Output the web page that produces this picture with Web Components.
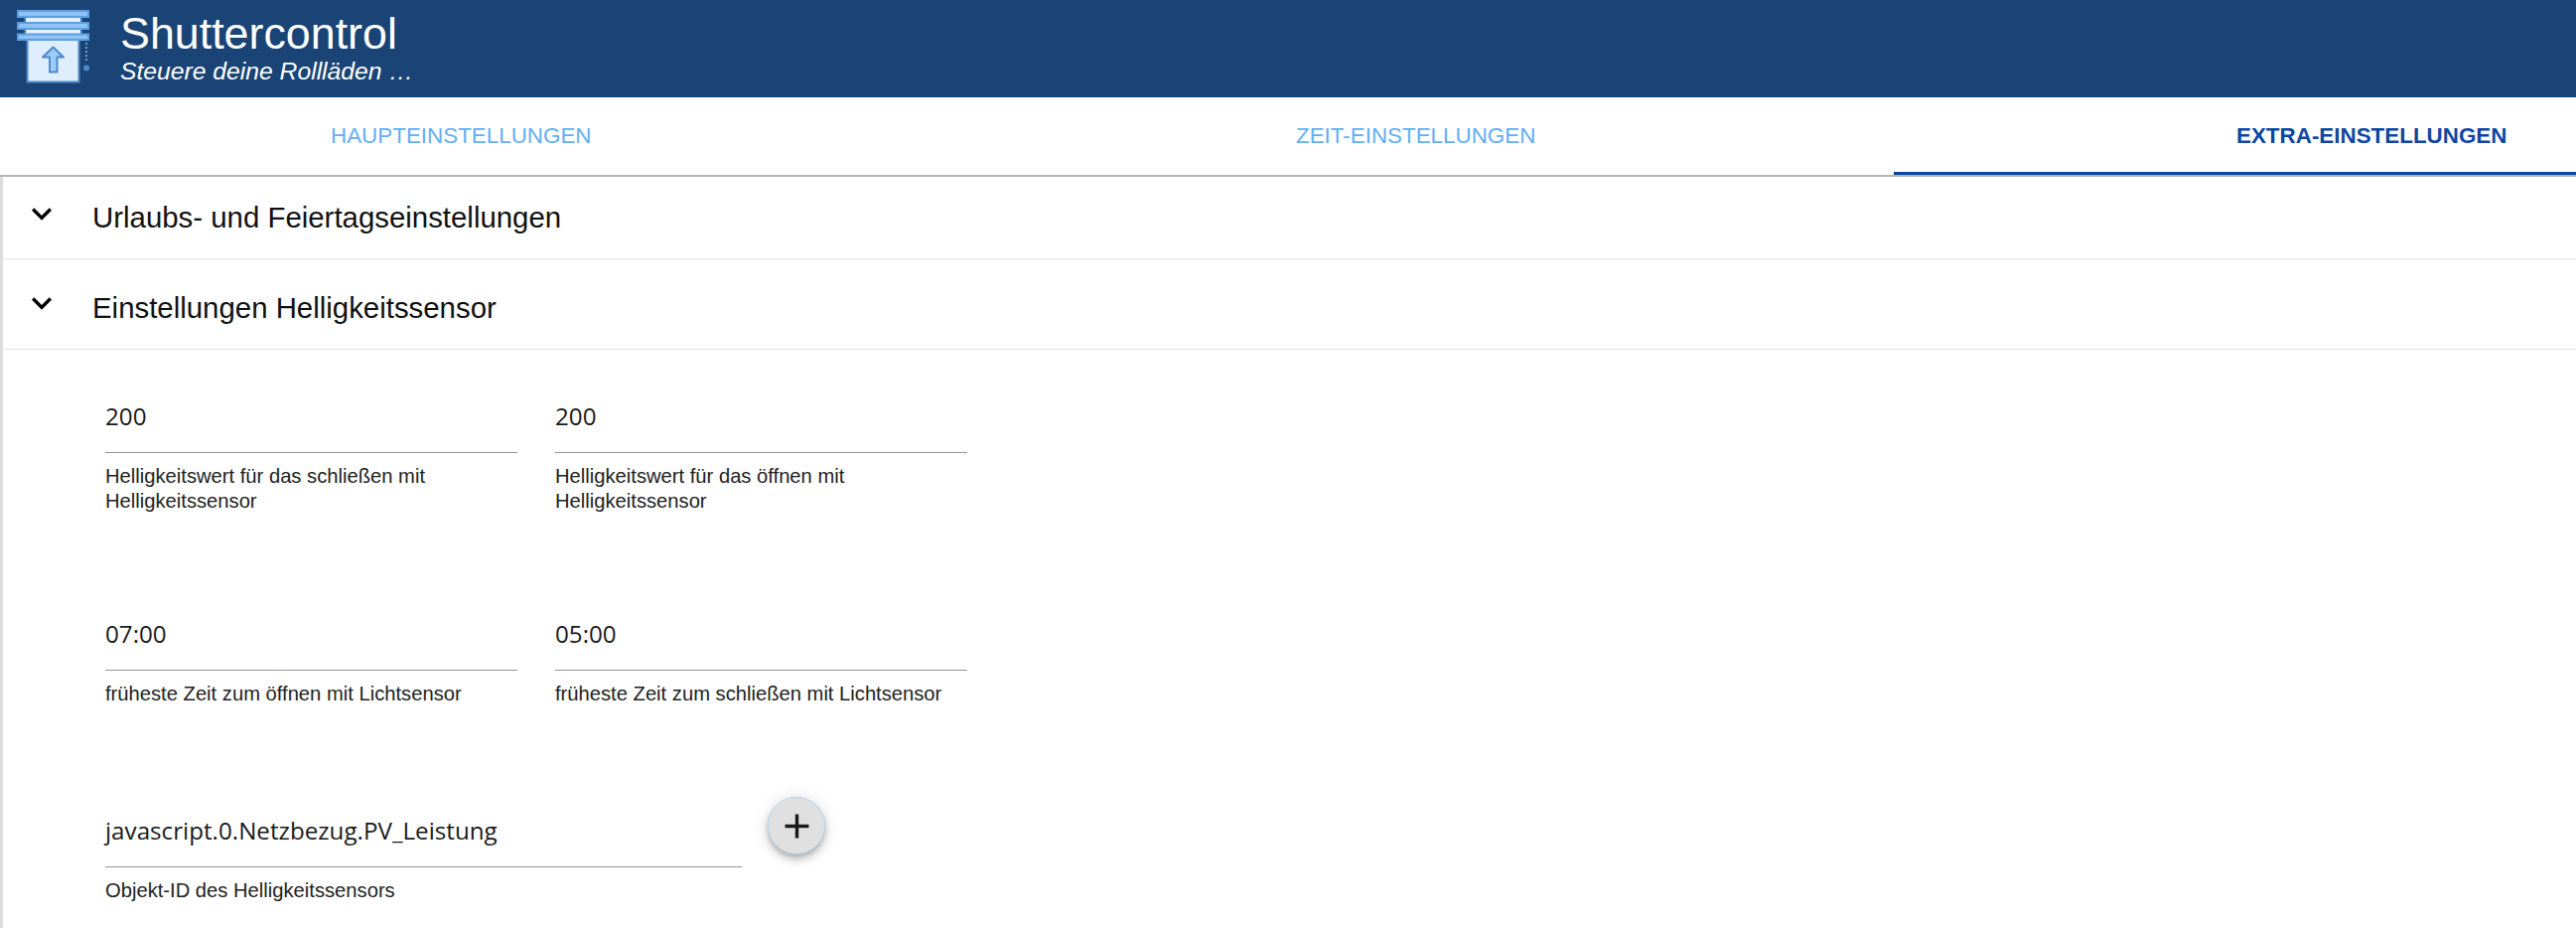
<!DOCTYPE html>
<html lang="de">
<head>
<meta charset="utf-8">
<title>Shuttercontrol</title>
<style>
    html, body{
        margin: 0;
        height: 100%;
        overflow: hidden;
        background: #fff;
        font-family: "Liberation Sans", Arial, sans-serif;
    }
</style>
</head>
<body>
<app-header titel="Shuttercontrol" untertitel="Steuere deine Rollläden …"></app-header>
<tab-bar>
    <tab-item style="width:945px;padding-left:333px">HAUPTEINSTELLUNGEN</tab-item>
    <tab-item style="width:962px;padding-left:360px">ZEIT-EINSTELLUNGEN</tab-item>
    <tab-item active style="flex:1;padding-left:345px">EXTRA-EINSTELLUNGEN</tab-item>
</tab-bar>
<settings-panel>
    <accordion-row height="83" pad="24" icon="16.5">Urlaubs- und Feiertagseinstellungen</accordion-row>
    <accordion-row height="91" pad="32" icon="24">Einstellungen Helligkeitssensor</accordion-row>
    <field-row height="219" style="margin-top:45px">
        <text-field value="200" label="Helligkeitswert für das schließen mit Helligkeitssensor"></text-field>
        <text-field value="200" label="Helligkeitswert für das öffnen mit Helligkeitssensor"></text-field>
    </field-row>
    <field-row height="198">
        <text-field value="07:00" label="früheste Zeit zum öffnen mit Lichtsensor"></text-field>
        <text-field value="05:00" label="früheste Zeit zum schließen mit Lichtsensor"></text-field>
    </field-row>
    <field-row height="120">
        <text-field wide value="javascript.0.Netzbezug.PV_Leistung" label="Objekt-ID des Helligkeitssensors"></text-field>
        <fab-button></fab-button>
    </field-row>
</settings-panel>

<script>
class AppHeader extends HTMLElement{
    constructor(){
        super();
        this.attachShadow({mode: 'open'});
        this.shadowRoot.innerHTML=`
            <style>
                :host{
                    display: flex;
                    height: 98px;
                    background-color: #1a4475;
                    color: #fff;
                }
                svg{
                    width: 110px;
                    height: 98px;
                    flex: none;
                }
                .texte{
                    margin-left: 11px;
                    padding-top: 8px;
                }
                h1{
                    margin: 0;
                    font-size: 44.8px;
                    line-height: 50px;
                    font-weight: normal;
                }
                p{
                    margin: 0;
                    font-size: 24.7px;
                    line-height: 28px;
                    font-style: italic;
                }
            </style>
            <svg viewBox="0 0 110 98">
                <rect x="25" y="16" width="57" height="7" fill="#e3f0fd" stroke="#3d76b5" stroke-width="2"/>
                <rect x="25" y="28" width="57" height="7" fill="#e3f0fd" stroke="#3d76b5" stroke-width="2"/>
                <rect x="27.5" y="40" width="52" height="42.5" fill="#deeeff" stroke="#4f8ac9" stroke-width="2"/>
                <rect x="18" y="11" width="71" height="6" fill="#8fc3f5" stroke="#5f9fe0" stroke-width="2"/>
                <rect x="18" y="23" width="71" height="6" fill="#8fc3f5" stroke="#5f9fe0" stroke-width="2"/>
                <rect x="18" y="34.5" width="71" height="5.5" fill="#8fc3f5" stroke="#5f9fe0" stroke-width="2"/>
                <path d="M53.5 47.5 L64 57.5 H57.5 V72.5 H50 V57.5 H43 Z" fill="#9ccbf7" stroke="#4f8ac9" stroke-width="2" stroke-linejoin="round"/>
                <path d="M87 43 V62" stroke="#5f9fe0" stroke-width="2" stroke-dasharray="2 2"/>
                <circle cx="87" cy="68.5" r="3" fill="#4f8ac9"/>
            </svg>
            <div class="texte">
                <h1>${this.getAttribute('titel')}</h1>
                <p>${this.getAttribute('untertitel')}</p>
            </div>
        `
    }
}

class TabBar extends HTMLElement{
    constructor(){
        super();
        this.attachShadow({mode: 'open'});
        this.shadowRoot.innerHTML=`
            <style>
                :host{
                    display: flex;
                    height: 78px;
                    border-bottom: 2px solid #b4b4b4;
                    background-color: #fff;
                }
            </style>
            <slot></slot>
        `
    }
}

class TabItem extends HTMLElement{
    constructor(){
        super();
        this.attachShadow({mode: 'open'});
        this.shadowRoot.innerHTML=`
            <style>
                :host{
                    display: block;
                    box-sizing: border-box;
                    height: 78px;
                    padding-top: 25px;
                    font-size: 22.4px;
                    line-height: 27px;
                    color: #64aef5;
                    white-space: nowrap;
                }
                :host([active]){
                    font-weight: bold;
                    color: #0d47a1;
                    border-bottom: 3px solid #0d47a1;
                }
            </style>
            <slot></slot>
        `
    }
}

class SettingsPanel extends HTMLElement{
    constructor(){
        super();
        this.attachShadow({mode: 'open'});
        this.shadowRoot.innerHTML=`
            <style>
                :host{
                    display: block;
                    border-left: 3px solid #dcdcdc;
                    height: 756px;
                }
            </style>
            <slot></slot>
        `
    }
}

class AccordionRow extends HTMLElement{
    constructor(){
        super();
        this.attachShadow({mode: 'open'});
        this.shadowRoot.innerHTML=`
            <style>
                :host{
                    display: flex;
                    box-sizing: border-box;
                    height: ${this.getAttribute('height')}px;
                    padding-left: 90px;
                    padding-top: ${this.getAttribute('pad')}px;
                    border-bottom: 1px solid #e2e2e2;
                    position: relative;
                    font-size: 29.4px;
                    line-height: 34px;
                    color: #111;
                }
                svg{
                    position: absolute;
                    left: 19px;
                    top: ${this.getAttribute('icon')}px;
                    width: 40px;
                    height: 40px;
                }
            </style>
            <svg viewBox="0 0 24 24"><path d="M7.41 8.59 12 13.17l4.59-4.58L18 10l-6 6-6-6z" fill="#000"/></svg>
            <span><slot></slot></span>
        `
    }
}

class FieldRow extends HTMLElement{
    constructor(){
        super();
        this.attachShadow({mode: 'open'});
        this.shadowRoot.innerHTML=`
            <style>
                :host{
                    display: flex;
                    gap: 38px;
                    height: ${this.getAttribute('height')}px;
                    padding-left: 103px;
                }
            </style>
            <slot></slot>
        `
    }
}

class TextField extends HTMLElement{
    constructor(){
        super();
        this.attachShadow({mode: 'open'});
        this.shadowRoot.innerHTML=`
            <style>
                :host{
                    display: block;
                    width: 415px;
                }
                :host([wide]){
                    width: 641px;
                }
                .wert{
                    height: 44px;
                    line-height: 44px;
                    padding-bottom: 14px;
                    border-bottom: 1px solid #949494;
                    font-family: "Open Sans", sans-serif;
                    font-size: 24.2px;
                    color: #1a1a1a;
                }
                .hilfe{
                    margin-top: 11px;
                    font-size: 20.2px;
                    line-height: 25px;
                    color: #222;
                }
            </style>
            <div class="wert">${this.getAttribute('value')}</div>
            <div class="hilfe">${this.getAttribute('label')}</div>
        `
    }
}

class FabButton extends HTMLElement{
    constructor(){
        super();
        this.attachShadow({mode: 'open'});
        this.shadowRoot.innerHTML=`
            <style>
                :host{
                    display: flex;
                    align-items: center;
                    justify-content: center;
                    box-sizing: border-box;
                    width: 58px;
                    height: 58px;
                    margin-left: -12px;
                    margin-top: -12px;
                    border: 1px solid #b5d5ef;
                    border-radius: 50%;
                    background-color: #e0e0e0;
                    box-shadow: 0 3px 5px -1px rgba(0,0,0,.2), 0 6px 10px 0 rgba(0,0,0,.14), 0 1px 18px 0 rgba(0,0,0,.12);
                }
                svg{
                    width: 41px;
                    height: 41px;
                }
            </style>
            <svg viewBox="0 0 24 24"><path d="M19 13h-6v6h-2v-6H5v-2h6V5h2v6h6v2z" fill="#1a1a1a"/></svg>
        `
    }
}

customElements.define('app-header', AppHeader);
customElements.define('tab-bar', TabBar);
customElements.define('tab-item', TabItem);
customElements.define('settings-panel', SettingsPanel);
customElements.define('accordion-row', AccordionRow);
customElements.define('field-row', FieldRow);
customElements.define('text-field', TextField);
customElements.define('fab-button', FabButton);
</script>
</body>
</html>
